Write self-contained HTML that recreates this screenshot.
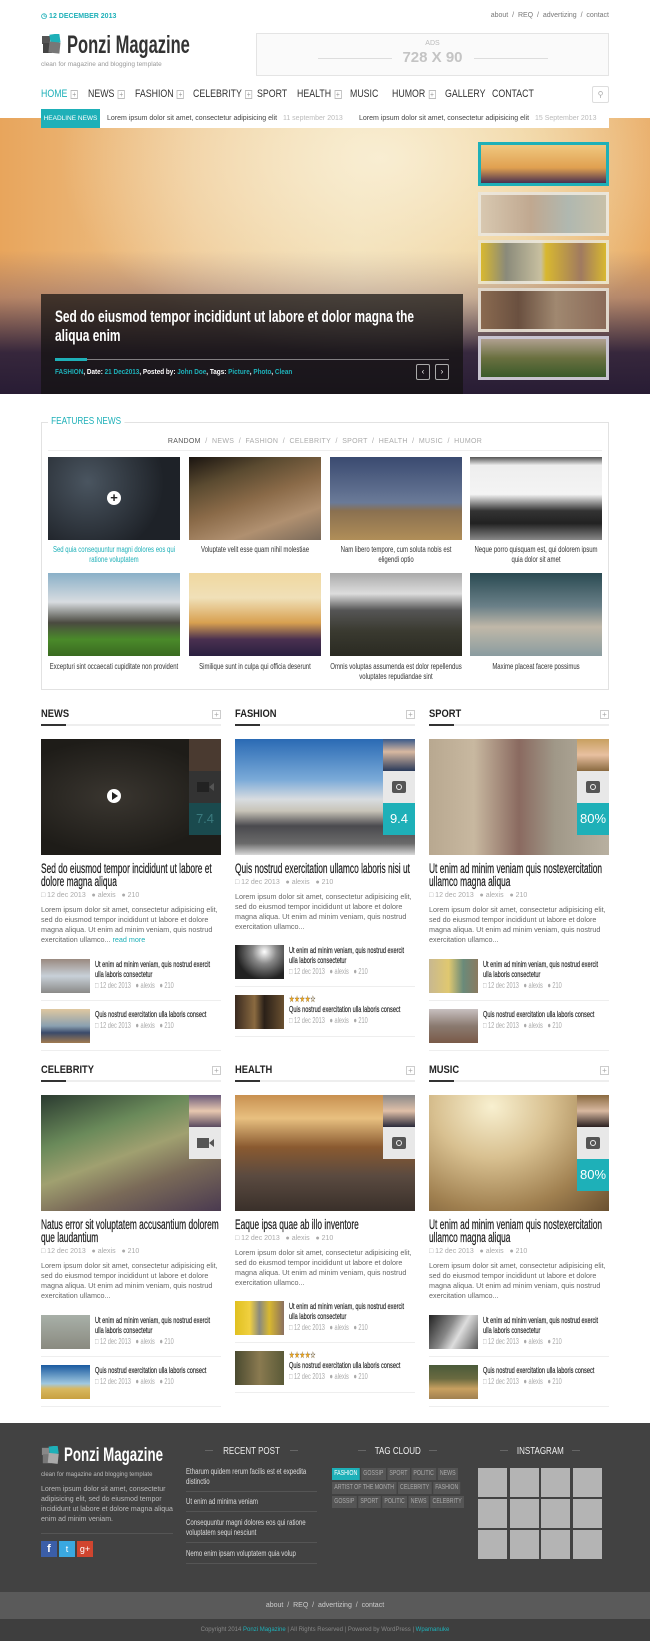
<!DOCTYPE html>
<html><head><meta charset="utf-8">
<style>
*{margin:0;padding:0;box-sizing:border-box}
body{width:650px;height:1641px;position:relative;background:#fff;font-family:"Liberation Sans",sans-serif;color:#333;overflow:hidden}
.a{position:absolute}
.teal{color:#1eb0b8}
.nav span{position:absolute;top:88px;font-size:11px;color:#333;transform:scaleX(.8);transform-origin:0 0;white-space:nowrap}
.pl{display:inline-block;width:9px;height:9px;border:1px solid #bbb;font-size:8px;line-height:7px;text-align:center;color:#999;vertical-align:0;margin-left:4px;font-style:normal}
.thumb{position:absolute;left:478px;width:131px;height:44px;border:3px solid rgba(240,235,225,.85)}
.fi{position:absolute;width:132px;height:83px}
.fc{position:absolute;width:176px;text-align:center;font-size:8px;line-height:10px;color:#333;transform:scaleX(.75);transform-origin:0 0}
.col{position:absolute;width:180px}
.hd{font-size:11px;font-weight:bold;line-height:12px;color:#222;transform:scaleX(.85);transform-origin:0 0}
.hl{position:relative;height:2px;background:#eee;margin-top:4px}
.hl:before{content:"";position:absolute;left:0;top:0;width:25px;height:2px;background:#333}
.hp{position:absolute;right:0;top:2px;width:9px;height:9px;border:1px solid #ccc;font-size:8px;line-height:7px;text-align:center;color:#aaa}
.img{position:relative;height:116px;margin-top:13px}
.av{position:absolute;right:0;top:0;width:32px;height:32px}
.ic{position:absolute;right:0;top:32px;width:32px;height:32px;background:#e8e8e8}
.sc{position:absolute;right:0;top:64px;width:32px;height:32px;background:#1eb0b8;color:#fff;font-size:13px;text-align:center;line-height:32px}
.tt{font-size:13.5px;line-height:13px;margin-top:7px;color:#1a1a1a;width:290px;transform:scaleX(.62);transform-origin:0 0;-webkit-text-stroke:.2px #1a1a1a}
.mt{font-size:7px;color:#aaa;line-height:10px;margin-top:3px}
.ex{font-size:7.2px;color:#666;line-height:10px;margin-top:4px}
.it{position:relative;height:42px;border-bottom:1px solid #eee;margin-top:8px}
.it .t{position:absolute;left:0;top:0;width:49px;height:34px}
.it .x{position:absolute;left:54px;top:0;width:190px;font-size:8.5px;line-height:10px;color:#222;transform:scaleX(.66);transform-origin:0 0;-webkit-text-stroke:.15px #222}
.it .x .mt{margin-top:1px;font-size:8.5px;-webkit-text-stroke:0}
.stars{color:#f0a820;font-size:9px;line-height:9px}
.cam{display:block;margin:10px auto 0;width:14px;height:12px;border-radius:2px;background:#555;position:relative}
.cam:after{content:"";position:absolute;left:4px;top:3px;width:4px;height:4px;border:1.5px solid #eee;border-radius:50%}
.vid{display:block;margin:11px 0 0 8px;width:12px;height:10px;background:#555;position:relative}
.vid:after{content:"";position:absolute;right:-5px;top:1px;border:4px solid transparent;border-right:5px solid #555;border-left:0}
.fh{position:absolute;color:#eee;font-size:10px;text-align:center}
.fh span{display:inline-block;transform:scaleX(.8)}
.fh:before,.fh:after{content:"";display:inline-block;width:8px;height:1px;background:#666;vertical-align:3px;margin:0 3px}
.rp{position:absolute;left:186px;width:131px;border-bottom:1px solid #555;padding-bottom:4px}
.rp div{font-size:8px;line-height:10px;color:#ddd;width:172px;transform:scaleX(.76);transform-origin:0 0}
.tag{display:inline-block;background:#555;color:#aaa;font-size:7px;height:12px;line-height:12px;padding:0 3px;margin:0 2px 2px 0}
.ig{position:absolute;width:29px;height:29px;background:#b4b4b4}
</style></head><body>

<div class="a" style="left:41px;top:12px;font-size:7px;font-weight:bold;color:#1eb0b8">&#9719; 12 DECEMBER 2013</div>
<div class="a" style="right:41px;top:12px;font-size:7px;color:#777">about &nbsp;/&nbsp; REQ &nbsp;/&nbsp; advertizing &nbsp;/&nbsp; contact</div>

<svg class="a" style="left:41px;top:34px" width="22" height="22" viewBox="0 0 22 22"><rect x="1" y="2" width="8" height="8" fill="#555"/><rect x="9" y="0" width="10" height="9" fill="#1eb0b8" transform="rotate(-8 14 5)"/><rect x="2" y="9" width="9" height="10" fill="#444"/><rect x="8" y="8" width="11" height="11" fill="#777" transform="rotate(6 13 13)"/></svg>
<div class="a" style="left:67px;top:31px;font-size:25px;font-weight:bold;color:#333;transform:scaleX(.66);transform-origin:0 0;white-space:nowrap">Ponzi Magazine</div>
<div class="a" style="left:41px;top:61px;font-size:6.5px;color:#999">clean for magazine and blogging template</div>

<div class="a" style="left:256px;top:33px;width:353px;height:43px;border:1px solid #e4e4e4;background:#fafafa"></div>
<div class="a" style="left:256px;top:40px;width:353px;text-align:center;font-size:7px;color:#bbb">ADS</div>
<div class="a" style="left:256px;top:49px;width:353px;text-align:center;font-size:15px;font-weight:bold;color:#c4c4c4">728 X 90</div>
<div class="a" style="left:318px;top:58px;width:74px;height:1px;background:#ddd"></div>
<div class="a" style="left:474px;top:58px;width:74px;height:1px;background:#ddd"></div>

<div class="nav">
<span style="left:41px;color:#1eb0b8">HOME<i class="pl">+</i></span>
<span style="left:88px">NEWS<i class="pl">+</i></span>
<span style="left:135px">FASHION<i class="pl">+</i></span>
<span style="left:193px">CELEBRITY<i class="pl">+</i></span>
<span style="left:257px">SPORT</span>
<span style="left:297px">HEALTH<i class="pl">+</i></span>
<span style="left:350px">MUSIC</span>
<span style="left:392px">HUMOR<i class="pl">+</i></span>
<span style="left:445px">GALLERY</span>
<span style="left:492px">CONTACT</span>
</div>
<div class="a" style="left:592px;top:86px;width:17px;height:17px;border:1px solid #ddd;border-radius:2px;font-size:8px;color:#aaa;text-align:center;line-height:15px">&#9906;</div>

<div class="a" style="left:0;top:118px;width:650px;height:276px;background:
radial-gradient(ellipse 320px 200px at 380px 40px,rgba(250,240,215,.9),rgba(250,240,215,0)),
linear-gradient(180deg,rgba(0,0,0,0) 0%,rgba(0,0,0,0) 48%,rgba(120,90,110,.45) 65%,rgba(45,32,58,.95) 85%,rgba(40,28,52,1) 100%),
linear-gradient(90deg,#e8a55c 0%,#eec690 30%,#eed8a8 55%,#ecc888 80%,#e8a860 100%)"></div>
<div class="a" style="left:0;top:113px;width:650px;height:5px;background:#fff"></div>
<div class="a" style="left:41px;top:109px;width:568px;height:19px;background:#fff"></div>
<div class="a" style="left:41px;top:109px;width:59px;height:19px;background:#1eb0b8;color:#fff;font-size:6.5px;line-height:19px;text-align:center">HEADLINE NEWS</div>
<div class="a" style="left:107px;top:109px;font-size:7px;line-height:19px;color:#444">Lorem ipsum dolor sit amet, consectetur adipisicing elit <span style="color:#bbb;margin-left:4px">11 september 2013</span></div>
<div class="a" style="left:359px;top:109px;font-size:7px;line-height:19px;color:#444">Lorem ipsum dolor sit amet, consectetur adipisicing elit <span style="color:#bbb;margin-left:4px">15 September 2013</span></div>

<div class="thumb" style="top:142px;border-color:#1eb0b8;background:linear-gradient(180deg,#f0c880,#e0a050 60%,#4a3050)"></div>
<div class="thumb" style="top:192px;background:linear-gradient(90deg,#d8c8b0,#c0a890 40%,#b0b8b0 70%,#c8c0a8)"></div>
<div class="thumb" style="top:240px;background:linear-gradient(90deg,#d8b830 0%,#8a8a7a 20%,#c8c0a0 48%,#d8b830 52%,#a07a60 80%,#d8b830)"></div>
<div class="thumb" style="top:288px;background:linear-gradient(90deg,#8a6a50,#6a5040 30%,#a08870 60%,#8a6a58)"></div>
<div class="thumb" style="top:336px;background:linear-gradient(180deg,#b0a090,#6a7040 50%,#3a5a2a);border-color:#c8c4d0"></div>

<div class="a" style="left:41px;top:294px;width:422px;height:100px;background:rgba(20,18,16,.72)"></div>
<div class="a" style="left:55px;top:307px;width:563px;font-size:17px;line-height:19px;font-weight:bold;color:#fff;transform:scaleX(.7);transform-origin:0 0">Sed do eiusmod tempor incididunt ut labore et dolor magna the aliqua enim</div>
<div class="a" style="left:55px;top:359px;width:394px;height:1px;background:rgba(255,255,255,.45)"></div>
<div class="a" style="left:55px;top:358px;width:32px;height:3px;background:#1eb0b8"></div>
<div class="a" style="left:55px;top:367px;font-size:7.5px;font-weight:bold;color:#fff;transform:scaleX(.85);transform-origin:0 0;white-space:nowrap"><span class="teal">FASHION</span>, Date: <span class="teal">21 Dec2013</span>, Posted by: <span class="teal">John Doe</span>, Tags: <span class="teal">Picture</span>, <span class="teal">Photo</span>, <span class="teal">Clean</span></div>
<div class="a" style="left:416px;top:364px;width:14px;height:16px;border:1px solid #aaa;border-radius:2px;color:#fff;font-size:8px;text-align:center;line-height:14px">&#8249;</div>
<div class="a" style="left:435px;top:364px;width:14px;height:16px;border:1px solid #aaa;border-radius:2px;color:#fff;font-size:8px;text-align:center;line-height:14px">&#8250;</div>

<div class="a" style="left:41px;top:422px;width:568px;height:268px;border:1px solid #e2e2e2"></div>
<div class="a" style="left:48px;top:415px;padding:0 4px;background:#fff;font-size:10.5px;color:#1eb0b8;transform:scaleX(.78);transform-origin:0 0">FEATURES NEWS</div>
<div class="a" style="left:48px;top:438px;width:554px;text-align:center;font-size:7px;color:#aaa;letter-spacing:.3px"><span style="color:#555">RANDOM</span> &nbsp;/&nbsp; NEWS &nbsp;/&nbsp; FASHION &nbsp;/&nbsp; CELEBRITY &nbsp;/&nbsp; SPORT &nbsp;/&nbsp; HEALTH &nbsp;/&nbsp; MUSIC &nbsp;/&nbsp; HUMOR</div>
<div class="a" style="left:48px;top:450px;width:554px;height:1px;background:#eee"></div>

<div class="fi" style="left:48px;top:457px;background:radial-gradient(circle at 30% 30%,#4a5560,#1e2228 70%)"><div style="position:absolute;left:59px;top:34px;width:14px;height:14px;border-radius:50%;background:#fff;color:#222;font-size:13px;line-height:13px;text-align:center;font-weight:bold">+</div></div>
<div class="fi" style="left:189px;top:457px;background:linear-gradient(160deg,#1a1410 0%,#5a4a30 25%,#8a6a48 50%,#b09070 75%,#7a6a5a)"></div>
<div class="fi" style="left:330px;top:457px;background:linear-gradient(180deg,#3a4a70 0%,#6a7a98 55%,#8a7050 65%,#b08e58 100%)"></div>
<div class="fi" style="left:470px;top:457px;background:linear-gradient(180deg,#555 0%,#eee 10%,#f4f4f4 45%,#333 65%,#222 80%,#888 100%)"></div>
<div class="fc" style="left:48px;top:545px;color:#1eb0b8">Sed quia consequuntur magni dolores eos qui ratione voluptatem</div>
<div class="fc" style="left:189px;top:545px">Voluptate velit esse quam nihil molestiae</div>
<div class="fc" style="left:330px;top:545px">Nam libero tempore, cum soluta nobis est eligendi optio</div>
<div class="fc" style="left:470px;top:545px">Neque porro quisquam est, qui dolorem ipsum quia dolor sit amet</div>

<div class="fi" style="left:48px;top:573px;background:linear-gradient(180deg,#8ab0c8 0%,#d8dce0 35%,#4a4a40 60%,#4a8a2a 80%,#3a6a20)"></div>
<div class="fi" style="left:189px;top:573px;background:linear-gradient(180deg,#f0d8a0 0%,#f0e0b8 30%,#d8a050 60%,#4a3050 80%,#2a2040)"></div>
<div class="fi" style="left:330px;top:573px;background:linear-gradient(180deg,#aaa 0%,#ddd 25%,#555 45%,#3a3a30 70%,#2a2a22)"></div>
<div class="fi" style="left:470px;top:573px;background:linear-gradient(180deg,#2a4a52 0%,#6a8088 40%,#c0b8a8 65%,#8a9ca0 100%)"></div>
<div class="fc" style="left:48px;top:662px">Excepturi sint occaecati cupiditate non provident</div>
<div class="fc" style="left:189px;top:662px">Similique sunt in culpa qui officia deserunt</div>
<div class="fc" style="left:330px;top:662px">Omnis voluptas assumenda est dolor repellendus voluptates repudiandae sint</div>
<div class="fc" style="left:470px;top:662px">Maxime placeat facere possimus</div>

<!-- ROW 1 -->
<div class="col" style="left:41px;top:708px">
<div class="hd">NEWS</div><div class="hp">+</div><div class="hl"></div>
<div class="img" style="background:radial-gradient(ellipse at 40% 50%,#3a3630,#1e1c18 70%)">
<div class="av" style="background:#4a3a30"></div><div class="ic" style="background:#333"><i class="vid" style="background:#222"></i></div><div class="sc" style="background:#1a4a4e;color:#3a7a7e">7.4</div>
<div style="position:absolute;left:66px;top:50px;width:14px;height:14px;border-radius:50%;background:#fff"></div><div style="position:absolute;left:71px;top:53px;border:4px solid transparent;border-left:6px solid #222;border-right:0"></div>
</div>
<div class="tt">Sed do eiusmod tempor incididunt ut labore et dolore magna aliqua</div>
<div class="mt">&#9633; 12 dec 2013 &nbsp; &#9679; alexis &nbsp; &#9679; 210</div>
<div class="ex">Lorem ipsum dolor sit amet, consectetur adipisicing elit, sed do eiusmod tempor incididunt ut labore et dolore magna aliqua. Ut enim ad minim veniam, quis nostrud exercitation ullamco... <span class="teal">read more</span></div>
<div class="it" style="margin-top:14px"><div class="t" style="background:linear-gradient(180deg,#9a8a80,#c8d0d8 50%,#8a8a88)"></div><div class="x">Ut enim ad minim veniam, quis nostrud exercit<br>ulla laboris consectetur<div class="mt">&#9633; 12 dec 2013 &nbsp; &#9679; alexis &nbsp; &#9679; 210</div></div></div>
<div class="it"><div class="t" style="background:linear-gradient(180deg,#e0c8a0,#8aa0b0 50%,#3a4a6a 70%,#a07a50)"></div><div class="x">Quis nostrud exercitation ulla laboris consect<div class="mt">&#9633; 12 dec 2013 &nbsp; &#9679; alexis &nbsp; &#9679; 210</div></div></div>
</div>

<div class="col" style="left:235px;top:708px">
<div class="hd">FASHION</div><div class="hp">+</div><div class="hl"></div>
<div class="img" style="background:linear-gradient(180deg,#2a6ab4 0%,#7aaad8 35%,#d8dce0 52%,#c8c4b8 62%,#4a4a4e 75%,#6a6a6a 90%,#d8d8d8)">
<div class="av" style="background:linear-gradient(#3a5a8a,#d8b8a0 40%,#2a3a5a)"></div><div class="ic"><i class="cam"></i></div><div class="sc">9.4</div></div>
<div class="tt">Quis nostrud exercitation ullamco laboris nisi ut</div>
<div class="mt">&#9633; 12 dec 2013 &nbsp; &#9679; alexis &nbsp; &#9679; 210</div>
<div class="ex">Lorem ipsum dolor sit amet, consectetur adipisicing elit, sed do eiusmod tempor incididunt ut labore et dolore magna aliqua. Ut enim ad minim veniam, quis nostrud exercitation ullamco...</div>
<div class="it" style="margin-top:13px"><div class="t" style="background:radial-gradient(circle at 60% 20%,#fff,#888 30%,#222 70%)"></div><div class="x">Ut enim ad minim veniam, quis nostrud exercit<br>ulla laboris consectetur<div class="mt">&#9633; 12 dec 2013 &nbsp; &#9679; alexis &nbsp; &#9679; 210</div></div></div>
<div class="it"><div class="t" style="background:linear-gradient(90deg,#3a2a20,#8a6a40 40%,#2a2018 60%,#6a5030)"></div><div class="x"><div class="stars">&#9733;&#9733;&#9733;&#9733;&#9734;</div>Quis nostrud exercitation ulla laboris consect<div class="mt">&#9633; 12 dec 2013 &nbsp; &#9679; alexis &nbsp; &#9679; 210</div></div></div>
</div>

<div class="col" style="left:429px;top:708px">
<div class="hd">SPORT</div><div class="hp">+</div><div class="hl"></div>
<div class="img" style="background:linear-gradient(90deg,#b8a890 0%,#c8b8a0 25%,#8a6a60 50%,#a09888 70%,#b8b0a0)">
<div class="av" style="background:linear-gradient(#c8a060,#e8c0a0 50%,#8a6a40)"></div><div class="ic"><i class="cam"></i></div><div class="sc">80%</div></div>
<div class="tt">Ut enim ad minim veniam quis nostexercitation ullamco magna aliqua</div>
<div class="mt">&#9633; 12 dec 2013 &nbsp; &#9679; alexis &nbsp; &#9679; 210</div>
<div class="ex">Lorem ipsum dolor sit amet, consectetur adipisicing elit, sed do eiusmod tempor incididunt ut labore et dolore magna aliqua. Ut enim ad minim veniam, quis nostrud exercitation ullamco...</div>
<div class="it" style="margin-top:14px"><div class="t" style="background:linear-gradient(90deg,#c8b890,#e0c870 40%,#6a8a7a 70%,#8a7a60)"></div><div class="x">Ut enim ad minim veniam, quis nostrud exercit<br>ulla laboris consectetur<div class="mt">&#9633; 12 dec 2013 &nbsp; &#9679; alexis &nbsp; &#9679; 210</div></div></div>
<div class="it"><div class="t" style="background:linear-gradient(180deg,#c8c0c0,#8a7a70 50%,#7a5a48)"></div><div class="x">Quis nostrud exercitation ulla laboris consect<div class="mt">&#9633; 12 dec 2013 &nbsp; &#9679; alexis &nbsp; &#9679; 210</div></div></div>
</div>

<!-- ROW 2 -->
<div class="col" style="left:41px;top:1064px">
<div class="hd">CELEBRITY</div><div class="hp">+</div><div class="hl"></div>
<div class="img" style="background:linear-gradient(160deg,#2a3a30 0%,#6a8a5a 30%,#a0a070 50%,#7a6a58 70%,#4a3a50 100%)">
<div class="av" style="background:linear-gradient(#6a5a7a,#e8c8b0 50%,#5a4a60)"></div><div class="ic"><i class="vid"></i></div></div>
<div class="tt">Natus error sit voluptatem accusantium dolorem que laudantium</div>
<div class="mt">&#9633; 12 dec 2013 &nbsp; &#9679; alexis &nbsp; &#9679; 210</div>
<div class="ex">Lorem ipsum dolor sit amet, consectetur adipisicing elit, sed do eiusmod tempor incididunt ut labore et dolore magna aliqua. Ut enim ad minim veniam, quis nostrud exercitation ullamco...</div>
<div class="it" style="margin-top:14px"><div class="t" style="background:linear-gradient(180deg,#a8b0a8,#8a8a80)"></div><div class="x">Ut enim ad minim veniam, quis nostrud exercit<br>ulla laboris consectetur<div class="mt">&#9633; 12 dec 2013 &nbsp; &#9679; alexis &nbsp; &#9679; 210</div></div></div>
<div class="it"><div class="t" style="background:linear-gradient(180deg,#1a5aa0,#a0c8e0 55%,#d8b860 70%,#c8a040)"></div><div class="x">Quis nostrud exercitation ulla laboris consect<div class="mt">&#9633; 12 dec 2013 &nbsp; &#9679; alexis &nbsp; &#9679; 210</div></div></div>
</div>

<div class="col" style="left:235px;top:1064px">
<div class="hd">HEALTH</div><div class="hp">+</div><div class="hl"></div>
<div class="img" style="background:linear-gradient(180deg,#c89050 0%,#e8c080 20%,#8a5a30 45%,#5a4a40 70%,#3a302a)">
<div class="av" style="background:linear-gradient(#8a8a8a,#e0c0a8 50%,#2a2a3a)"></div><div class="ic"><i class="cam"></i></div></div>
<div class="tt">Eaque ipsa quae ab illo inventore</div>
<div class="mt">&#9633; 12 dec 2013 &nbsp; &#9679; alexis &nbsp; &#9679; 210</div>
<div class="ex">Lorem ipsum dolor sit amet, consectetur adipisicing elit, sed do eiusmod tempor incididunt ut labore et dolore magna aliqua. Ut enim ad minim veniam, quis nostrud exercitation ullamco...</div>
<div class="it" style="margin-top:13px"><div class="t" style="background:linear-gradient(90deg,#e0c020,#f0d040 30%,#8a8a80 50%,#d8b830 70%,#8a7060)"></div><div class="x">Ut enim ad minim veniam, quis nostrud exercit<br>ulla laboris consectetur<div class="mt">&#9633; 12 dec 2013 &nbsp; &#9679; alexis &nbsp; &#9679; 210</div></div></div>
<div class="it"><div class="t" style="background:linear-gradient(90deg,#4a4a30,#8a7a50 50%,#5a5a38)"></div><div class="x"><div class="stars">&#9733;&#9733;&#9733;&#9733;&#9734;</div>Quis nostrud exercitation ulla laboris consect<div class="mt">&#9633; 12 dec 2013 &nbsp; &#9679; alexis &nbsp; &#9679; 210</div></div></div>
</div>

<div class="col" style="left:429px;top:1064px">
<div class="hd">MUSIC</div><div class="hp">+</div><div class="hl"></div>
<div class="img" style="background:radial-gradient(ellipse at 35% 10%,#f8f0d0,#d8c090 35%,#a08050 70%,#6a5030)">
<div class="av" style="background:linear-gradient(#8a6a40,#d8b8a0 50%,#2a2020)"></div><div class="ic"><i class="cam"></i></div><div class="sc">80%</div></div>
<div class="tt">Ut enim ad minim veniam quis nostexercitation ullamco magna aliqua</div>
<div class="mt">&#9633; 12 dec 2013 &nbsp; &#9679; alexis &nbsp; &#9679; 210</div>
<div class="ex">Lorem ipsum dolor sit amet, consectetur adipisicing elit, sed do eiusmod tempor incididunt ut labore et dolore magna aliqua. Ut enim ad minim veniam, quis nostrud exercitation ullamco...</div>
<div class="it" style="margin-top:14px"><div class="t" style="background:linear-gradient(120deg,#222,#888 40%,#ddd 60%,#555)"></div><div class="x">Ut enim ad minim veniam, quis nostrud exercit<br>ulla laboris consectetur<div class="mt">&#9633; 12 dec 2013 &nbsp; &#9679; alexis &nbsp; &#9679; 210</div></div></div>
<div class="it"><div class="t" style="background:linear-gradient(180deg,#4a5a3a,#6a6a40 40%,#c8a060 70%,#a08050)"></div><div class="x">Quis nostrud exercitation ulla laboris consect<div class="mt">&#9633; 12 dec 2013 &nbsp; &#9679; alexis &nbsp; &#9679; 210</div></div></div>
</div>

<!-- footer -->
<div class="a" style="left:0;top:1423px;width:650px;height:169px;background:#424242"></div>
<div class="a" style="left:0;top:1592px;width:650px;height:27px;background:#5a5a5a"></div>
<div class="a" style="left:0;top:1619px;width:650px;height:22px;background:#3e3e3e"></div>

<svg class="a" style="left:41px;top:1446px" width="20" height="20" viewBox="0 0 22 22"><rect x="1" y="2" width="8" height="8" fill="#888"/><rect x="9" y="0" width="10" height="9" fill="#1eb0b8" transform="rotate(-8 14 5)"/><rect x="2" y="9" width="9" height="10" fill="#777"/><rect x="8" y="8" width="11" height="11" fill="#aaa" transform="rotate(6 13 13)"/></svg>
<div class="a" style="left:64px;top:1445px;font-size:19px;font-weight:bold;color:#fff;transform:scaleX(.7);transform-origin:0 0;white-space:nowrap">Ponzi Magazine</div>
<div class="a" style="left:41px;top:1472px;font-size:6px;color:#bbb">clean for magazine and blogging template</div>
<div class="a" style="left:41px;top:1485px;width:132px;font-size:7px;line-height:10px;color:#bbb">Lorem ipsum dolor sit amet, consectetur adipisicing elit, sed do eiusmod tempor incididunt ut labore et dolore magna aliqua enim ad minim veniam.</div>
<div class="a" style="left:41px;top:1533px;width:132px;height:1px;background:#555"></div>
<div class="a" style="left:41px;top:1541px;width:16px;height:16px;background:#3b5ea8;color:#fff;font-size:11px;font-weight:bold;text-align:center;line-height:16px">f</div>
<div class="a" style="left:59px;top:1541px;width:16px;height:16px;background:#3aa8e0;color:#fff;font-size:9px;text-align:center;line-height:16px">t</div>
<div class="a" style="left:77px;top:1541px;width:16px;height:16px;background:#d0452f;color:#fff;font-size:9px;text-align:center;line-height:16px">g+</div>

<div class="fh" style="left:186px;top:1446px;width:131px"><span>RECENT POST</span></div>
<div class="rp" style="top:1467px"><div>Etharum quidem rerum facilis est et expedita distinctio</div></div>
<div class="rp" style="top:1497px"><div>Ut enim ad minima veniam</div></div>
<div class="rp" style="top:1518px"><div>Consequuntur magni dolores eos qui ratione voluptatem sequi nesciunt</div></div>
<div class="rp" style="top:1549px"><div>Nemo enim ipsam voluptatem quia volup</div></div>

<div class="fh" style="left:332px;top:1446px;width:131px"><span>TAG CLOUD</span></div>
<div class="a" style="left:332px;top:1468px;width:180px;line-height:0;transform:scaleX(.75);transform-origin:0 0">
<span class="tag" style="background:#1eb0b8;color:#fff">FASHION</span><span class="tag">GOSSIP</span><span class="tag">SPORT</span><span class="tag">POLITIC</span><span class="tag">NEWS</span><br><span class="tag">ARTIST OF THE MONTH</span><span class="tag">CELEBRITY</span><span class="tag">FASHION</span><br><span class="tag">GOSSIP</span><span class="tag">SPORT</span><span class="tag">POLITIC</span><span class="tag">NEWS</span><span class="tag">CELEBRITY</span>
</div>

<div class="fh" style="left:478px;top:1446px;width:124px"><span>INSTAGRAM</span></div>
<div class="ig" style="left:478px;top:1468px"></div><div class="ig" style="left:510px;top:1468px"></div><div class="ig" style="left:541px;top:1468px"></div><div class="ig" style="left:573px;top:1468px"></div>
<div class="ig" style="left:478px;top:1499px"></div><div class="ig" style="left:510px;top:1499px"></div><div class="ig" style="left:541px;top:1499px"></div><div class="ig" style="left:573px;top:1499px"></div>
<div class="ig" style="left:478px;top:1530px"></div><div class="ig" style="left:510px;top:1530px"></div><div class="ig" style="left:541px;top:1530px"></div><div class="ig" style="left:573px;top:1530px"></div>

<div class="a" style="left:0;top:1592px;width:650px;text-align:center;font-size:7px;line-height:27px;color:#ccc">about &nbsp;/&nbsp; REQ &nbsp;/&nbsp; advertizing &nbsp;/&nbsp; contact</div>
<div class="a" style="left:0;top:1619px;width:650px;text-align:center;font-size:6px;line-height:22px;color:#888">Copyright 2014 <span class="teal">Ponzi Magazine</span> | All Rights Reserved | Powered by WordPress | <span class="teal">Wpamanuke</span></div>

</body></html>
